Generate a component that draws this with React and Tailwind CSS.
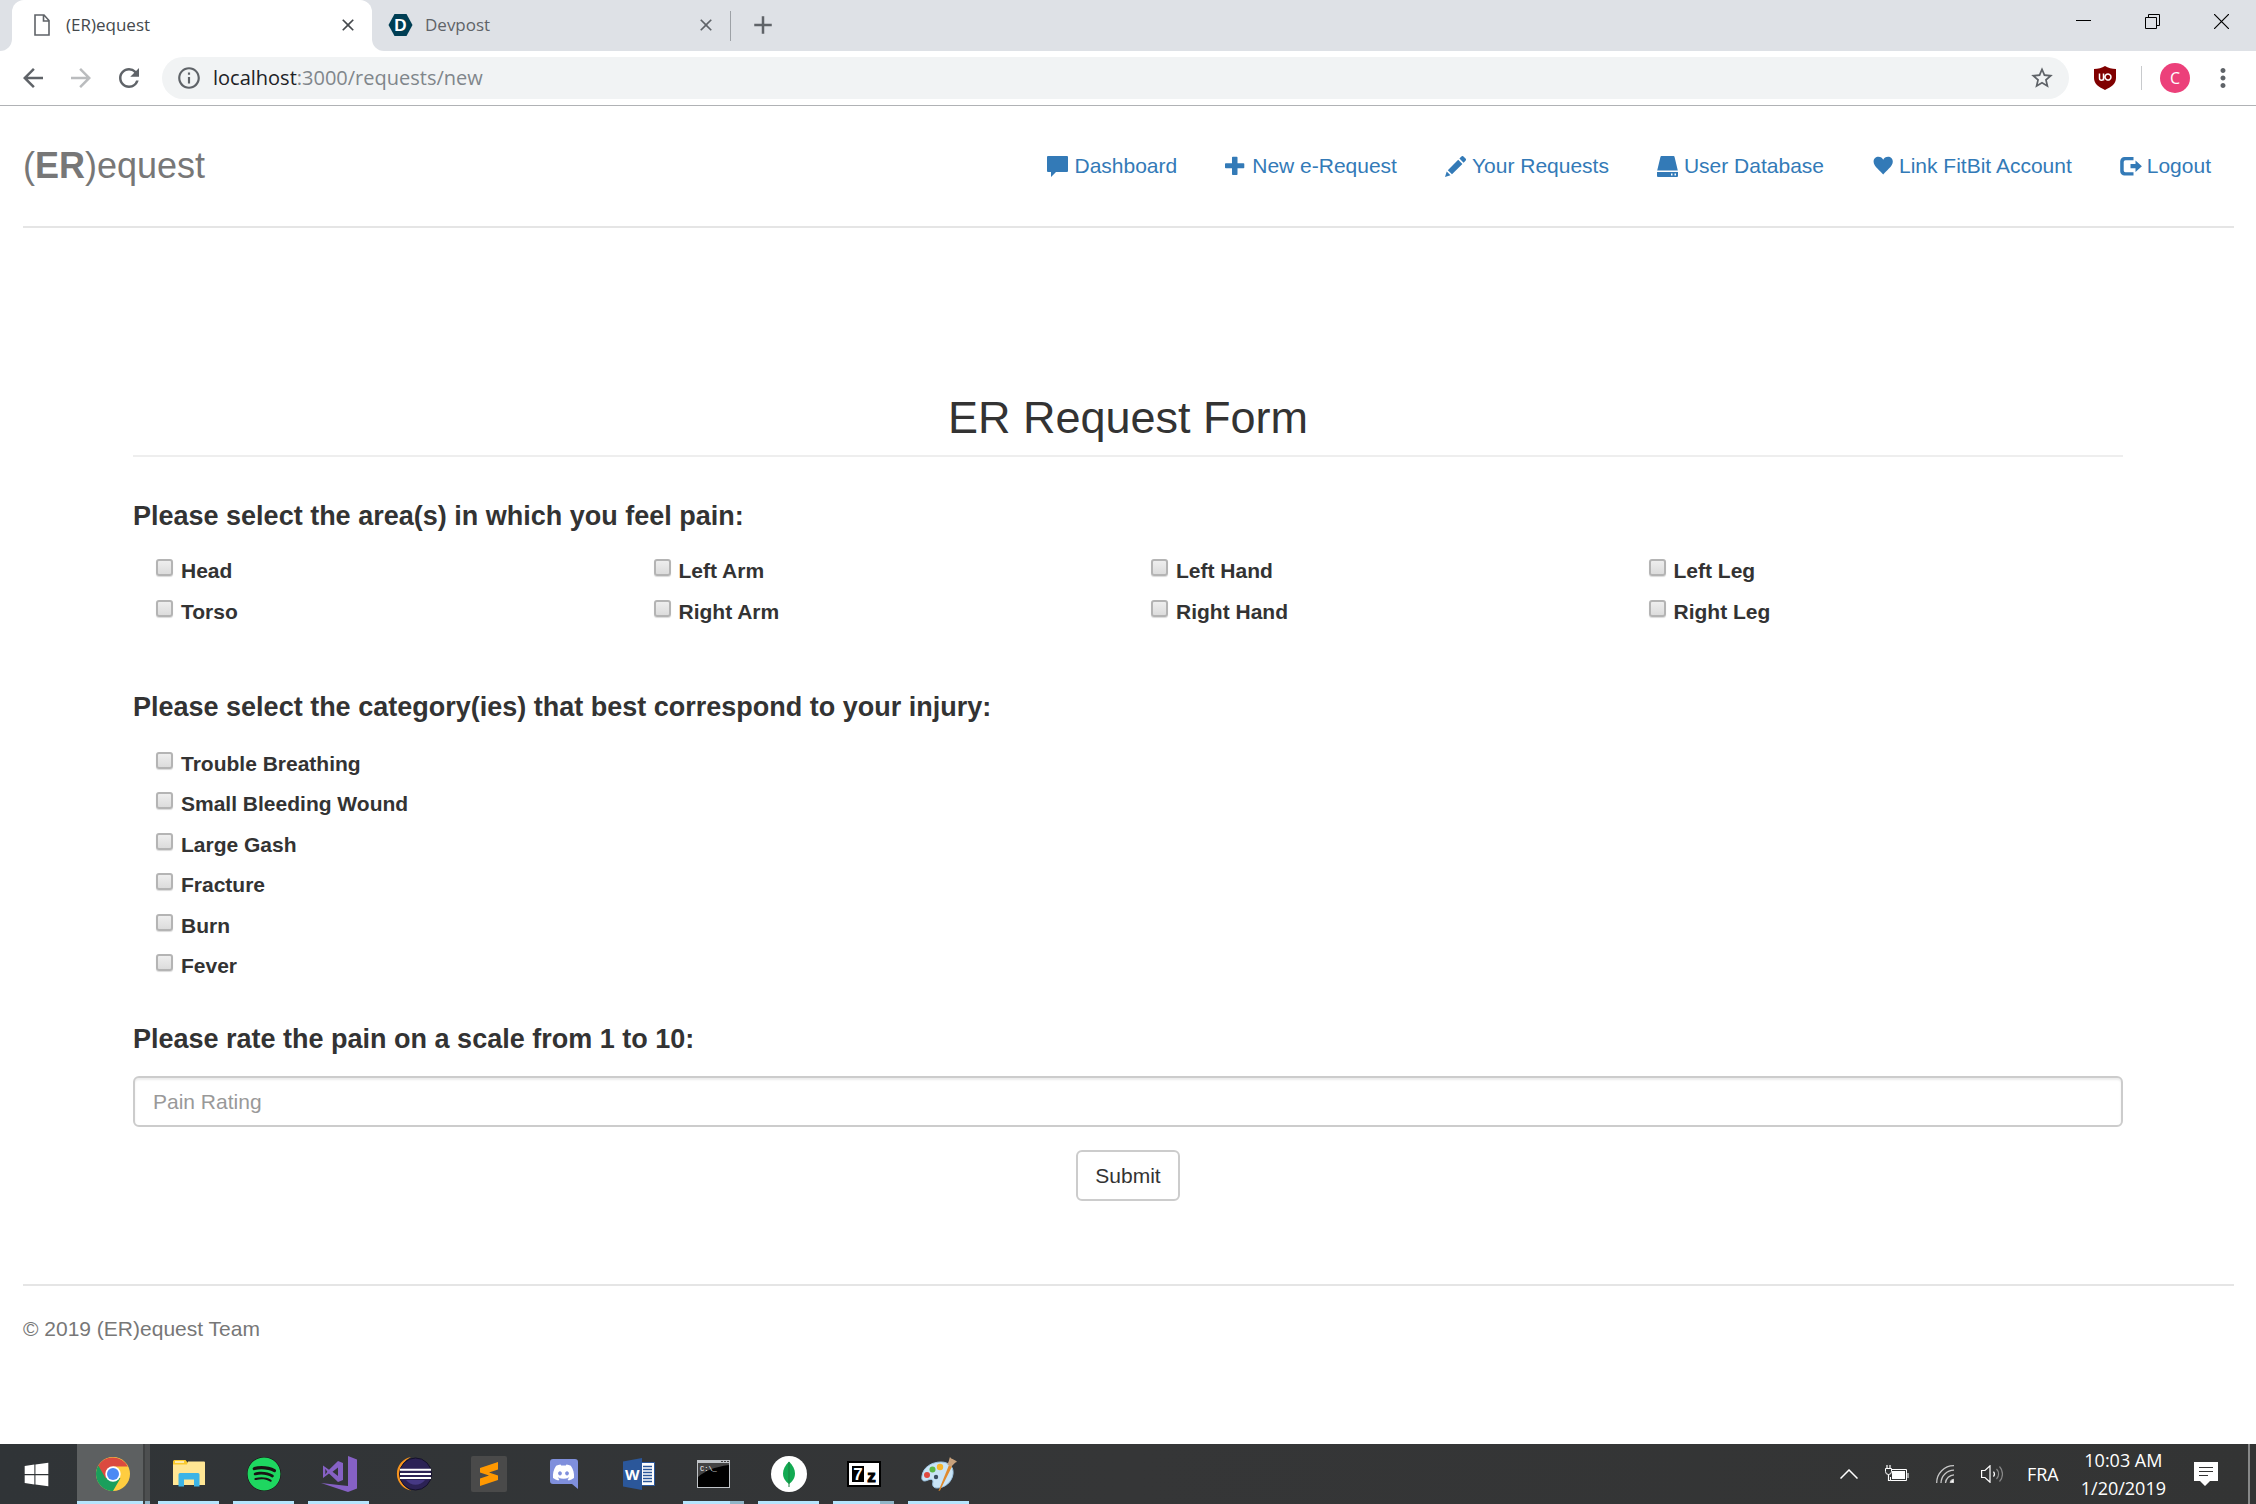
import {
  MdAdd, MdArrowBack, MdArrowForward, MdClose, MdInfoOutline,
  MdMoreVert, MdRefresh, MdStarBorder
} from "react-icons/md";
import { FaDiscord, FaSpotify, FaWindows } from "react-icons/fa";

const AREAS = [
  "Head", "Left Arm", "Left Hand", "Left Leg",
  "Torso", "Right Arm", "Right Hand", "Right Leg",
];

const CATEGORIES = [
  "Trouble Breathing", "Small Bleeding Wound", "Large Gash",
  "Fracture", "Burn", "Fever",
];

/* ── nav icons ── */
function CommentIcon() {
  return (
    <svg width="21" height="21" viewBox="0 0 21 21" fill="currentColor">
      <path d="M1 0h19a1 1 0 0 1 1 1v14a1 1 0 0 1-1 1H9l-5 5v-5H1a1 1 0 0 1-1-1V1a1 1 0 0 1 1-1z" />
    </svg>
  );
}

function PlusIcon() {
  return (
    <svg width="21" height="21" viewBox="0 0 21 21" fill="currentColor">
      <path d="M7 1.500a.8.8 0 0 1 .8-.8h3.900a.8.8 0 0 1 .8.8v5.800h6a.8.8 0 0 1 .8.8v3.400a.8.8 0 0 1-.8.8h-6v6a.8.8 0 0 1-.8.8H7.800a.8.8 0 0 1-.8-.8v-6H.8a.8.8 0 0 1-.8-.8V8.100a.8.8 0 0 1 .8-.8H7z" />
    </svg>
  );
}

function PencilIcon() {
  return (
    <svg width="21" height="21" viewBox="0 0 21 21" fill="currentColor">
      <path d="M0 21l1.700-5.500 3.800 3.800zM2.800 14.200L13.200 3.700l4.200 4.200L7 18.300zM14.400 2.500l2-2a1.500 1.500 0 0 1 2.100 0l2 2a1.500 1.500 0 0 1 0 2.200l-1.900 2z" />
    </svg>
  );
}

function DriveIcon() {
  return (
    <svg width="21" height="21" viewBox="0 0 21 21" fill="currentColor">
      <path d="M4.500 0h12a1 1 0 0 1 1 .8L20.800 14.500H.2L3.500.8a1 1 0 0 1 1-.8z" />
      <path d="M0 16h21v4a1 1 0 0 1-1 1H1a1 1 0 0 1-1-1zM14 17.500v2h1.500v-2zM17.500 17.500v2H19v-2z" fillRule="evenodd" />
    </svg>
  );
}

function HeartIcon() {
  return (
    <svg width="21" height="21" viewBox="0 0 21 21" fill="currentColor">
      <path d="M11.200 18.500C8.700 15 1.600 10.300 1.600 5.700 1.600 2.500 3.900.8 6.400.8 8.700.8 10.400 2 11.200 3.700 12 2 13.800.8 16.100.8c2.500 0 4.700 1.700 4.700 4.900 0 4.600-7.100 9.300-9.600 12.800z" />
    </svg>
  );
}

function LogoutIcon() {
  return (
    <svg width="21" height="21" viewBox="0 0 21 21" fill="currentColor" overflow="visible">
      <path d="M13.500 1v3.200H5.500a1.800 1.800 0 0 0-1.800 1.800v8.500a1.800 1.800 0 0 0 1.800 1.800h8v3.200H4.500A4.300 4.300 0 0 1 .2 15.200V5.300A4.300 4.300 0 0 1 4.500 1z" />
      <path d="M10.500 8h5V4.500l6.400 5.800-6.400 5.700v-3.700h-5z" />
    </svg>
  );
}

const NAV_LINKS = [
  { label: "Dashboard", Icon: CommentIcon },
  { label: "New e-Request", Icon: PlusIcon },
  { label: "Your Requests", Icon: PencilIcon },
  { label: "User Database", Icon: DriveIcon },
  { label: "Link FitBit Account", Icon: HeartIcon },
  { label: "Logout", Icon: LogoutIcon },
];

/* ── browser chrome ── */
function TabStrip() {
  return (
    <div className="flex h-[51px] bg-[#dee1e6] text-[#5f6368]">
      <div className="w-3 shrink-0 bg-white">
        <div className="h-full rounded-br-xl bg-[#dee1e6]" />
      </div>
      <div className="flex w-[360px] shrink-0 items-center rounded-t-xl bg-white pr-3.5 pb-0.5 pl-[22px] text-[#45494d]">
        <svg width="16" height="22" viewBox="0 0 16 22" fill="none" stroke="#5f6368" strokeWidth="1.600">
          <path d="M1 1h9l5 5.500V21H1zM9.500 1v6H15" />
        </svg>
        <span className="ml-4 flex-1 text-[17px]">(ER)equest</span>
        <button aria-label="Close tab"><MdClose size={20} /></button>
      </div>
      <div className="w-[358px] shrink-0 bg-white">
        <div className="flex h-full items-center rounded-bl-xl bg-[#dee1e6] pr-3.5 pb-0.5 pl-4">
          <svg width="25" height="24" viewBox="0 0 25 24">
            <path d="M6.500 1h12l6 11-6 11h-12l-6-11z" fill="#003e54" />
            <text x="12.500" y="18" fontSize="17" fontWeight="700" fill="#fff" textAnchor="middle" fontFamily="Liberation Sans, sans-serif">D</text>
          </svg>
          <span className="ml-3 flex-1 text-[17px]">Devpost</span>
          <button aria-label="Close tab"><MdClose size={20} /></button>
        </div>
      </div>
      <div className="mt-[11px] h-[30px] w-px bg-[#9da1a6]" />
      <button aria-label="New tab" className="ml-[17px] pb-0.5"><MdAdd size={30} /></button>
      <div className="ml-auto flex items-start gap-[54px] pt-3.5 pr-[27px]">
        <button aria-label="Minimize">
          <svg width="15" height="15" viewBox="0 0 15 15"><path d="M0 6.500h15" stroke="#000" /></svg>
        </button>
        <button aria-label="Restore">
          <svg width="15" height="15" viewBox="0 0 15 15" fill="none" stroke="#000"><path d="M.5 3.500h11v11H.5zM3.500 3.500v-3h11v11h-3" /></svg>
        </button>
        <button aria-label="Close window">
          <svg width="15" height="15" viewBox="0 0 15 15"><path d="M0 0l15 15M15 0L0 15" stroke="#000" strokeWidth="1.200" /></svg>
        </button>
      </div>
    </div>
  );
}

function Toolbar() {
  return (
    <div className="flex h-[55px] items-center border-b border-[#b0b2b5] bg-white px-[18px] text-[#5f6368]">
      <div className="flex gap-[18px]">
        <button aria-label="Back"><MdArrowBack size={30} /></button>
        <button aria-label="Forward" className="text-[#babcbe]"><MdArrowForward size={30} /></button>
        <button aria-label="Reload"><MdRefresh size={30} /></button>
      </div>
      <div className="ml-[18px] flex h-[42px] flex-1 items-center rounded-full bg-[#f1f3f4] px-3.5">
        <MdInfoOutline size={26} />
        <div className="ml-[11px] flex-1 text-[20px] leading-[30px]">
          <span className="text-[#202124]">localhost</span>
          <span className="text-[#80868b]">:3000/requests/new</span>
        </div>
        <button aria-label="Bookmark this page"><MdStarBorder size={26} /></button>
      </div>
      <button aria-label="uBlock Origin" className="ml-[25px]">
        <svg width="22" height="24" viewBox="0 0 22 24">
          <path d="M11 0c3 2 7 3 11 3v9c0 6-5 9-11 12C5 21 0 18 0 12V3c4 0 8-1 11-3z" fill="#800000" />
          <path d="M5.500 7.500v4.800a2 2 0 0 0 4 0V7.500v7M12.800 8.300a3 3 0 1 1 0 5.500 3 3 0 0 1 0-5.500z" fill="none" stroke="#fff" strokeWidth="1.500" />
        </svg>
      </button>
      <div className="ml-[25px] h-6 w-px bg-[#c8cacd]" />
      <button className="ml-[18px] h-[30px] w-[30px] rounded-full bg-[#ec407a] text-base leading-[30px] text-white">C</button>
      <button aria-label="Menu" className="ml-[18px]"><MdMoreVert size={30} /></button>
    </div>
  );
}

/* ── form pieces ── */
function CheckRow({ name, label }) {
  return (
    <label className="flex items-start gap-2 pl-[23px] text-[21px] leading-[30px] font-bold">
      <input
        type="checkbox"
        name={name}
        value={label}
        className="mt-[3px] h-[17px] w-[17px] shrink-0 appearance-none rounded-[3px] border-2 border-[#b4b4b4] bg-linear-to-b from-[#eeeeee] to-[#dcdcdc] shadow-[0_1px_1px_rgba(0,0,0,0.15)]"
      />
      {label}
    </label>
  );
}

function RequestForm() {
  return (
    <form className="pt-[165px] pr-[111px] pb-[83px] pl-[110px]" onSubmit={(e) => e.preventDefault()}>
      <h1 className="border-b-2 border-[#eeeeee] pb-3 text-center text-[45px] leading-[50px]">ER Request Form</h1>

      <h4 className="mt-11 text-[27px] leading-[30px] font-bold">Please select the area(s) in which you feel pain:</h4>
      <div className="mt-[25px] grid grid-cols-4 gap-y-[11px]">
        {AREAS.map((area) => <CheckRow key={area} name="areas" label={area} />)}
      </div>

      <h4 className="mt-[65px] text-[27px] leading-[30px] font-bold">
        Please select the category(ies) that best correspond to your injury:
      </h4>
      <div className="mt-[27px] flex h-[232px] flex-col justify-between">
        {CATEGORIES.map((category) => <CheckRow key={category} name="categories" label={category} />)}
      </div>

      <label htmlFor="pain" className="mt-[43px] block text-[27px] leading-[30px] font-bold">
        Please rate the pain on a scale from 1 to 10:
      </label>
      <input
        id="pain"
        type="text"
        placeholder="Pain Rating"
        className="mt-[22px] block h-[51px] w-full rounded-md border-2 border-[#cccccc] px-[18px] text-[21px] leading-[30px] shadow-[inset_0_2px_2px_rgba(0,0,0,0.075)] placeholder:text-[#999999]"
      />
      <div className="mt-[23px] flex justify-center">
        <button className="h-[51px] rounded-md border-2 border-[#cccccc] bg-white px-[17px] text-[21px] leading-[30px]">Submit</button>
      </div>
    </form>
  );
}

/* ── taskbar icons ── */
function ChromeLogo() {
  return (
    <svg width="34" height="34" viewBox="0 0 34 34">
      <circle cx="17" cy="17" r="17" fill="#ffcd40" />
      <path d="M17 17L2.300 8.500A17 17 0 0 0 17 34l7.400-12.800z" fill="#1a9f5c" />
      <path d="M17 17v-7.500h14.800A17 17 0 0 0 2.300 8.500l7.300 12.700z" fill="#db4a3f" />
      <circle cx="17" cy="17" r="7.700" fill="#fff" />
      <circle cx="17" cy="17" r="6" fill="#4a8af4" />
    </svg>
  );
}

function FolderLogo() {
  return (
    <svg width="32" height="28" viewBox="0 0 32 28">
      <path d="M0 1.500A1.500 1.500 0 0 1 1.500 0h11L15 3v2H0z" fill="#f9c92c" />
      <path d="M2 2h9" stroke="#fff" strokeWidth="1.200" />
      <path d="M0 4.500h14l1-3h16a1 1 0 0 1 1 1V25H0z" fill="#ffe694" />
      <path d="M5.500 26.500v-12a1.500 1.500 0 0 1 1.500-1.500h18a1.500 1.500 0 0 1 1.500 1.500v12h-5.500v-7H11v7z" fill="#3cb4e7" />
    </svg>
  );
}

function VisualStudioLogo() {
  return (
    <svg width="36" height="36" viewBox="0 0 36 36" fill="#8661c5">
      <path d="M27 0l9 3.500v29L27 36 0 27l27 3z" />
      <path d="M2 9.500l6 4.300L17 5l5 2v17l-5 2-9-8.500L2 22zM4.300 12.700v5.800l2-2.800zM17 11.500l-5.500 4.200 5.500 4.200z" fillRule="evenodd" />
    </svg>
  );
}

function EclipseLogo() {
  return (
    <svg width="36" height="34" viewBox="0 0 36 34">
      <path d="M15 0A17 17 0 0 0 15 33.500 18.500 18.500 0 0 1 15 0z" fill="#f7941e" />
      <circle cx="19.500" cy="17" r="16" fill="#2c2255" stroke="#14102a" />
      <path d="M10 23a12 12 0 0 0 19 0z" fill="#463984" />
      <path d="M4 12.800h31M4 16.900h31M4 21h31" stroke="#fff" strokeWidth="2" />
    </svg>
  );
}

function SublimeLogo() {
  return (
    <svg width="36" height="36" viewBox="0 0 36 36">
      <rect width="36" height="36" rx="2" fill="#4a4a4a" />
      <path d="M9 12l18-6v7.500l-9 3 9 3V24L9 30v-7.500l9-3-9-3z" fill="#ff9800" />
    </svg>
  );
}

function DiscordLogo() {
  return (
    <div className="relative flex h-[30px] w-7 items-center justify-center">
      <svg className="absolute inset-0" width="28" height="30" viewBox="0 0 28 30">
        <path d="M3 0h22a3 3 0 0 1 3 3v27l-6-5H3a3 3 0 0 1-3-3V3a3 3 0 0 1 3-3z" fill="#7f8fdc" />
      </svg>
      <FaDiscord size={23} className="relative mb-1 text-white" />
    </div>
  );
}

function WordLogo() {
  return (
    <svg width="32" height="32" viewBox="0 0 32 32">
      <path d="M18 4.500h13.500v23H18z" fill="#fff" stroke="#2b579a" />
      <path d="M20 8.500h9M20 11.500h9M20 14.500h9M20 17.500h9M20 20.500h9M20 23.500h9" stroke="#2b579a" strokeWidth="1.300" />
      <path d="M0 3.500L19 0v32L0 28.500z" fill="#2b579a" />
      <text x="9.300" y="21.500" fontSize="15" fontWeight="700" fill="#fff" textAnchor="middle" fontFamily="Open Sans, sans-serif">W</text>
    </svg>
  );
}

function TerminalLogo() {
  return (
    <svg width="33" height="28" viewBox="0 0 33 28">
      <rect width="33" height="28" fill="#c0c4c8" />
      <path d="M1 3h31v24H1z" fill="#000" />
      <path d="M1 3h31v2C17 7 8 11 1 17z" fill="#444" />
      <path d="M24 1.500h2M27 1.500h2M30 1.500h2" stroke="#444" />
      <text x="3" y="11" fontSize="7" fill="#fff" fontFamily="Liberation Mono, monospace">C:\_</text>
    </svg>
  );
}

function MongoLogo() {
  return (
    <svg width="36" height="36" viewBox="0 0 36 36">
      <circle cx="18" cy="18" r="18" fill="#fff" />
      <path d="M18 5.500c4 4 6 8 6 12 0 4.500-2.500 8-6 10.500-3.500-2.500-6-6-6-10.500 0-4 2-8 6-12z" fill="#13aa52" />
      <path d="M18 6v25" stroke="#18803e" />
    </svg>
  );
}

function SevenZipLogo() {
  return (
    <svg width="34" height="26" viewBox="0 0 34 26">
      <rect width="34" height="26" fill="#000" />
      <rect x="2" y="2" width="30" height="22" fill="#fff" />
      <rect x="5" y="5" width="12" height="16" fill="#000" />
      <text x="11" y="19" fontSize="17" fontWeight="700" fill="#fff" textAnchor="middle" fontFamily="Liberation Sans, sans-serif">7</text>
      <text x="24.500" y="21" fontSize="17" fontWeight="700" fill="#000" stroke="#000" textAnchor="middle" fontFamily="Liberation Sans, sans-serif">z</text>
    </svg>
  );
}

function PaintLogo() {
  return (
    <svg width="36" height="34" viewBox="0 0 36 34">
      <path d="M20 5c8 0 13 5 12 12-1 8-8 14-16 14-4 0-5-3-4-6 0-3-2-3-5-2-4 2-7 1-6-4C2 10 11 5 20 5z" fill="#c9e4f6" stroke="#9cc4e2" />
      <circle cx="6" cy="18" r="3" fill="#e0483e" />
      <circle cx="11.500" cy="12.500" r="3" fill="#5cb947" />
      <circle cx="19" cy="10" r="3.200" fill="#f7b52c" />
      <circle cx="15" cy="20" r="2.200" fill="#3b4f63" />
      <path d="M28 8l3 1.500-12 24-1.500.5z" fill="#e08a2c" />
      <path d="M26 7c2-1 2-5 3-7 2 3 5 2 7 5-3 0-4 5-7 4.500z" fill="#c9a27c" />
    </svg>
  );
}

const TASKS = [
  { name: "File Explorer", icon: <FolderLogo />, open: true },
  { name: "Spotify", icon: <FaSpotify size={34} className="rounded-full bg-[#191414] text-[#1ed760]" />, open: true },
  { name: "Visual Studio", icon: <VisualStudioLogo />, open: true },
  { name: "Eclipse", icon: <EclipseLogo /> },
  { name: "Sublime Text", icon: <SublimeLogo /> },
  { name: "Discord", icon: <DiscordLogo /> },
  { name: "Word", icon: <WordLogo /> },
  { name: "Command Prompt", icon: <TerminalLogo />, open: true, stacked: true },
  { name: "MongoDB Compass", icon: <MongoLogo />, open: true },
  { name: "7-Zip", icon: <SevenZipLogo />, open: true, stacked: true },
  { name: "Paint", icon: <PaintLogo />, open: true },
];

function TaskButton({ task }) {
  return (
    <button aria-label={task.name} className="flex h-full w-[75px] flex-col items-center">
      <span className="flex flex-1 items-center justify-center pt-[3px]">{task.icon}</span>
      <span className="flex h-[3px] w-[61px]">
        {task.open && <span className="flex-1 bg-[#b5e5fd]" />}
        {task.stacked && <span className="w-3.5 bg-[#8fb5c8]" />}
      </span>
    </button>
  );
}

function Taskbar() {
  return (
    <div className="flex h-[60px] items-center bg-linear-to-r from-[#303437] via-[#353637] to-[#333434] text-white">
      <button aria-label="Start" className="flex h-full w-[72px] items-center justify-center">
        <FaWindows size={27} />
      </button>
      <button aria-label="Google Chrome" className="ml-[5px] flex h-full w-[73px]">
        <span className="flex h-full w-[66px] flex-col bg-[#5d6061]">
          <span className="flex flex-1 items-center justify-center pt-[3px] pl-1.5"><ChromeLogo /></span>
          <span className="h-[3px] w-full bg-[#b5e5fd]" />
        </span>
        <span className="flex h-full w-[7px] flex-col border-l-2 border-[#3f4142] bg-[#4d4f50]">
          <span className="mt-auto h-[3px] w-full bg-[#8fb5c8]" />
        </span>
      </button>
      <div className="flex h-full pl-px">
        {TASKS.map((task) => <TaskButton key={task.name} task={task} />)}
      </div>

      <div className="ml-auto flex h-full items-center text-lg leading-7">
        <button aria-label="Show hidden icons">
          <svg width="18" height="10" viewBox="0 0 18 10" fill="none" stroke="#fff" strokeWidth="1.500"><path d="M.5 9.500L9 1l8.500 8.500" /></svg>
        </button>
        <svg className="ml-[27px]" width="24" height="18" viewBox="0 0 24 18" fill="none" stroke="#fff">
          <path d="M7 4.500h14.500v11H5.500V12M23 8v5" />
          <path d="M7 6h13v8H7z" fill="#fff" stroke="none" />
          <path d="M.5 3.500h6v3a3 3 0 0 1-6 0z" fill="#333536" />
          <path d="M2 0v3M5 0v3M3.500 9.500v6h2" strokeWidth="1.200" />
        </svg>
        <svg className="ml-[27px]" width="18" height="18" viewBox="0 0 18 18" fill="none" stroke="#c8c8c8" strokeWidth="1.300">
          <path d="M.7 18A17 17 0 0 1 18 .7M5 18A13 13 0 0 1 18 5.200M9.500 18A9 9 0 0 1 18 9.800" />
          <path d="M14.300 18a4 4 0 0 1 3.700-3.700V18z" fill="#fff" />
        </svg>
        <svg className="ml-[27px]" width="22" height="18" viewBox="0 0 22 18" fill="none" stroke="#fff" strokeWidth="1.200">
          <path d="M.6 5.500H4L9 .8v16.400l-5-4.700H.6z" />
          <path d="M12.500 6.500a4 4 0 0 1 0 5" />
          <path d="M15.500 4a7 7 0 0 1 0 10M18.500 1.500a11 11 0 0 1 0 15" stroke="#888" />
        </svg>
        <span className="ml-6">FRA</span>
        <time className="ml-[22px] text-center">10:03 AM<br />1/20/2019</time>
        <button aria-label="Notifications" className="ml-7">
          <svg width="24" height="24" viewBox="0 0 24 24">
            <path d="M0 0h24v19h-8l-5 5-5-5H0z" fill="#fff" />
            <path d="M5 5.500h14M5 9.500h14M5 13.500h9" stroke="#333" strokeWidth="1.200" />
          </svg>
        </button>
        <div className="mr-1.5 ml-[30px] h-full w-0.5 bg-[#878888]" />
      </div>
    </div>
  );
}

export default function App() {
  return (
    <div className="flex min-h-screen flex-col bg-white font-['Open_Sans',sans-serif]">
      <TabStrip />
      <Toolbar />

      <div className="flex-1 pr-[22px] pl-[23px] font-['Liberation_Sans',Arial,sans-serif] text-[#333333]">
        <header className="flex items-center justify-between border-b-2 border-[#e5e5e5] py-[30px] pr-[23px]">
          <h3 className="text-4xl leading-[60px] text-[#777777]">(<b>ER</b>)equest</h3>
          <nav className="flex gap-12 text-[21px] leading-[30px] text-[#337ab7]">
            {NAV_LINKS.map(({ label, Icon }) => (
              <a key={label} href="#" className="flex items-center gap-1.5">
                <Icon />
                {label}
              </a>
            ))}
          </nav>
        </header>

        <RequestForm />

        <footer className="border-t-2 border-[#e5e5e5] pt-7 text-[21px] leading-[30px] text-[#777777]">
          © 2019 (ER)equest Team
        </footer>
      </div>

      <Taskbar />
    </div>
  );
}
